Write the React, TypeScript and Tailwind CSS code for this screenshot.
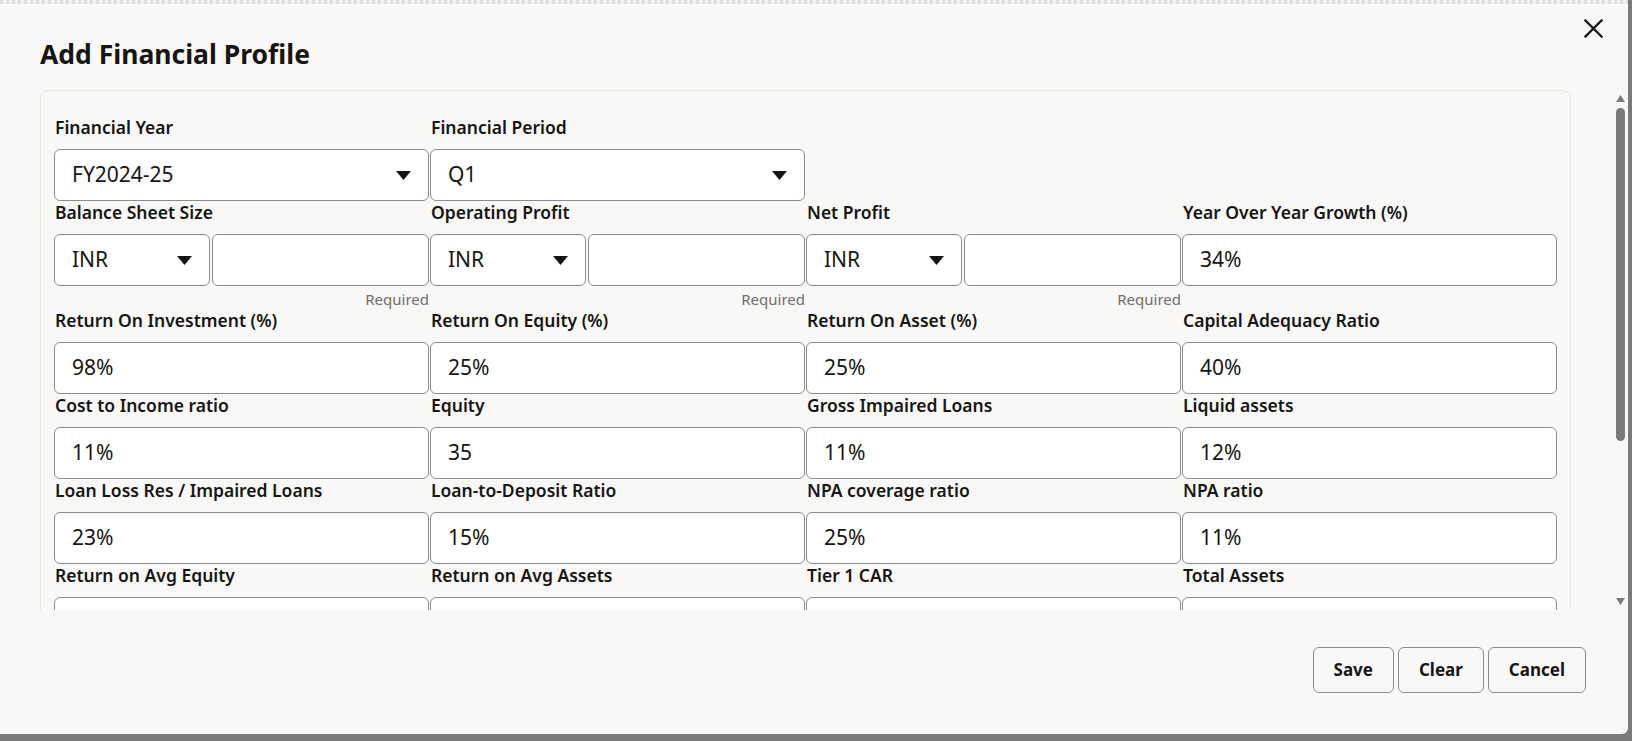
import React from 'react';

type Field =
  | { label: string; kind: 'select'; value: string }
  | { label: string; kind: 'currency' }
  | { label: string; kind: 'text'; value: string }
  | null;

const rows: { fields: Field[]; required?: boolean }[] = [
  {
    fields: [
      { label: 'Financial Year', kind: 'select', value: 'FY2024-25' },
      { label: 'Financial Period', kind: 'select', value: 'Q1' },
      null,
      null,
    ],
  },
  {
    required: true,
    fields: [
      { label: 'Balance Sheet Size', kind: 'currency' },
      { label: 'Operating Profit', kind: 'currency' },
      { label: 'Net Profit', kind: 'currency' },
      { label: 'Year Over Year Growth (%)', kind: 'text', value: '34%' },
    ],
  },
  {
    fields: [
      { label: 'Return On Investment (%)', kind: 'text', value: '98%' },
      { label: 'Return On Equity (%)', kind: 'text', value: '25%' },
      { label: 'Return On Asset (%)', kind: 'text', value: '25%' },
      { label: 'Capital Adequacy Ratio', kind: 'text', value: '40%' },
    ],
  },
  {
    fields: [
      { label: 'Cost to Income ratio', kind: 'text', value: '11%' },
      { label: 'Equity', kind: 'text', value: '35' },
      { label: 'Gross Impaired Loans', kind: 'text', value: '11%' },
      { label: 'Liquid assets', kind: 'text', value: '12%' },
    ],
  },
  {
    fields: [
      { label: 'Loan Loss Res / Impaired Loans', kind: 'text', value: '23%' },
      { label: 'Loan-to-Deposit Ratio', kind: 'text', value: '15%' },
      { label: 'NPA coverage ratio', kind: 'text', value: '25%' },
      { label: 'NPA ratio', kind: 'text', value: '11%' },
    ],
  },
  {
    fields: [
      { label: 'Return on Avg Equity', kind: 'text', value: '' },
      { label: 'Return on Avg Assets', kind: 'text', value: '' },
      { label: 'Tier 1 CAR', kind: 'text', value: '' },
      { label: 'Total Assets', kind: 'text', value: '' },
    ],
  },
];

function Caret() {
  return (
    <svg width="15" height="9" viewBox="0 0 15 9" className="shrink-0">
      <path d="M0 0 L15 0 L7.5 9 Z" fill="#161513" />
    </svg>
  );
}

function Box({ children, className = '' }: { children?: React.ReactNode; className?: string }) {
  return (
    <div
      className={`h-[52px] bg-white border border-[#8d8c8a] rounded-[6px] flex items-center pl-[17px] pr-[17px] text-[21px] text-[#161513] ${className}`}
    >
      {children}
    </div>
  );
}

function FieldView({ f, required }: { f: Field; required?: boolean }) {
  if (!f) return <div />;
  return (
    <div className="flex flex-col">
      <div className="h-[33px] leading-[23px] text-[17.5px] font-semibold text-[#161513] pl-[1px] whitespace-nowrap">
        {f.label}
      </div>
      {f.kind === 'select' && (
        <Box className="justify-between">
          <span>{f.value}</span>
          <Caret />
        </Box>
      )}
      {f.kind === 'text' && <Box>{f.value}</Box>}
      {f.kind === 'currency' && (
        <div className="flex gap-[2px]">
          <Box className="w-[156px] justify-between shrink-0">
            <span>INR</span>
            <Caret />
          </Box>
          <Box className="flex-1" />
        </div>
      )}
      {required && (
        <div className="h-[23px] pt-[3px] text-[15px] leading-[20px] text-[#6f6e6c] text-right">
          {f.kind === 'currency' ? 'Required' : ''}
        </div>
      )}
    </div>
  );
}

export default function App() {
  return (
    <div
      className="w-[1632px] h-[741px] bg-[#7a7a7a] overflow-hidden"
      style={{ fontFamily: '"Noto Sans", "Open Sans", sans-serif' }}
    >
      <div className="w-[1628px] h-[734px] bg-[#f9f8f7] rounded-br-[6px] flex flex-col overflow-hidden">
        <div className="h-[4px] bg-[repeating-linear-gradient(90deg,#e2e0de_0px,#e2e0de_3px,#f3f2f0_3px,#f3f2f0_6px)]" />
        <div className="h-[86px] flex justify-between items-start">
          <div className="pl-[40px] pt-[34px] text-[26.5px] leading-[32px] font-bold text-[#161513]">
            Add Financial Profile
          </div>
          <button className="mt-[15px] mr-[25px] w-[19px] h-[19px] flex items-center justify-center">
            <svg width="19" height="19" viewBox="0 0 19 19">
              <path d="M1.5 1.5 L17.5 17.5 M17.5 1.5 L1.5 17.5" stroke="#161513" strokeWidth="2.3" strokeLinecap="square" />
            </svg>
          </button>
        </div>
        <div className="h-[520px] flex">
          <div className="flex-1 overflow-hidden">
            <div className="ml-[40px] w-[1531px] border border-[#e9e7e4] rounded-[8px] px-[13px] pt-[25px] pb-[20px]">
              {rows.map((r, i) => (
                <div key={i} className="grid grid-cols-4 gap-x-[1px]">
                  {r.fields.map((f, j) => (
                    <FieldView key={j} f={f} required={r.required} />
                  ))}
                </div>
              ))}
            </div>
          </div>
          <div className="w-[12px] flex flex-col items-start pt-[5px] pb-[5px] pr-[3px]">
            <svg width="9" height="7" viewBox="0 0 9 7">
              <path d="M0 7 L4.5 0 L9 7 Z" fill="#7b7b7b" />
            </svg>
            <div className="mt-[6px] w-[9px] h-[333px] rounded-full bg-[#7b7b7b]" />
            <div className="flex-1" />
            <svg width="9" height="7" viewBox="0 0 9 7">
              <path d="M0 0 L9 0 L4.5 7 Z" fill="#7b7b7b" />
            </svg>
          </div>
        </div>
        <div className="flex justify-end gap-[4px] pt-[37px] pr-[42px]">
          {['Save', 'Clear', 'Cancel'].map((t) => (
            <button
              key={t}
              className="h-[46px] px-[20px] border border-[#8d8c8a] rounded-[6px] text-[17px] font-bold text-[#161513] bg-[#f9f8f7]"
            >
              {t}
            </button>
          ))}
        </div>
      </div>
    </div>
  );
}
